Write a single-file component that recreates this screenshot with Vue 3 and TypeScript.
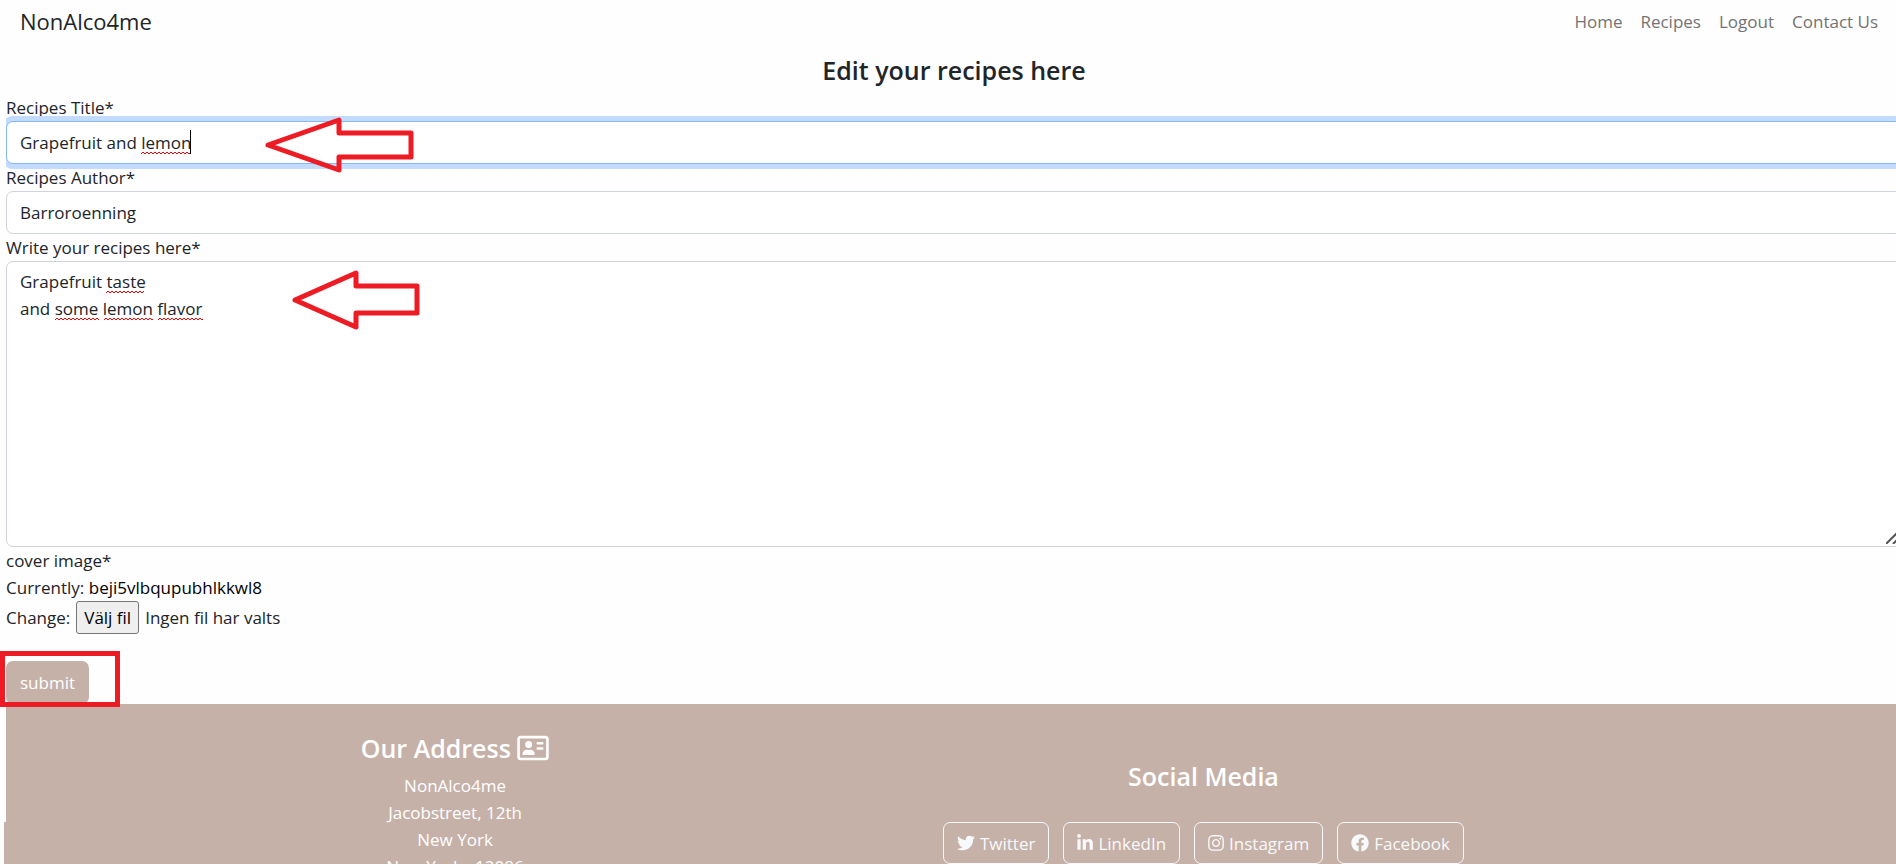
<script setup lang="ts">
import { ref } from 'vue'

interface Mark {
  left: number
  top: number
  width: number
}

const title = ref('Grapefruit and lemon')
const author = ref('Barroroenning')
const recipe = ref('Grapefruit taste\nand some lemon flavor')
const fileStatus = ref('Ingen fil har valts')
const picker = ref<HTMLInputElement | null>(null)

const navLinks: string[] = ['Home', 'Recipes', 'Logout', 'Contact Us']
const addressLines: string[] = ['NonAlco4me', 'Jacobstreet, 12th', 'New York', 'New York , 12086']

const titleMarks: Mark[] = [{ left: 135, top: 30, width: 49 }]
const recipeMarks: Mark[] = [
  { left: 100, top: 29, width: 38 },
  { left: 49, top: 56, width: 44 },
  { left: 98, top: 56, width: 49 },
  { left: 152, top: 56, width: 45 },
]

const socials = [
  {
    name: 'Twitter',
    box: '0 0 512 512',
    width: 18,
    path: 'M459.37 151.716c.325 4.548.325 9.097.325 13.645 0 138.72-105.583 298.558-298.558 298.558-59.452 0-114.68-17.219-161.137-47.106 8.447.974 16.568 1.299 25.34 1.299 49.055 0 94.213-16.568 130.274-44.832-46.132-.975-84.792-31.188-98.112-72.772 6.498.974 12.995 1.624 19.818 1.624 9.421 0 18.843-1.3 27.614-3.573-48.081-9.747-84.143-51.98-84.143-102.985v-1.299c13.969 7.797 30.214 12.67 47.431 13.319-28.264-18.843-46.781-51.005-46.781-87.391 0-19.492 5.197-37.36 14.294-52.954 51.655 63.675 129.3 105.258 216.365 109.807-1.624-7.797-2.599-15.918-2.599-24.04 0-57.828 46.782-104.934 104.934-104.934 30.213 0 57.502 12.67 76.67 33.137 23.715-4.548 46.456-13.32 66.599-25.34-7.798 24.366-24.366 44.833-46.132 57.827 21.117-2.273 41.584-8.122 60.426-16.243-14.292 20.791-32.161 39.308-52.628 54.253z',
  },
  {
    name: 'LinkedIn',
    box: '0 0 448 512',
    width: 16,
    path: 'M100.28 448H7.4V148.9h92.88zM53.79 108.1C24.09 108.1 0 83.5 0 53.8a53.79 53.79 0 0 1 107.58 0c0 29.7-24.1 54.3-53.79 54.3zM447.9 448h-92.68V302.4c0-34.7-.7-79.2-48.29-79.2-48.29 0-55.69 37.7-55.69 76.7V448h-92.78V148.9h89.08v40.8h1.3c12.4-23.5 42.69-48.3 87.88-48.3 94 0 111.28 61.9 111.28 142.3V448z',
  },
  {
    name: 'Instagram',
    box: '0 0 448 512',
    width: 16,
    path: 'M224.1 141c-63.6 0-114.9 51.3-114.9 114.9s51.3 114.9 114.9 114.9S339 319.5 339 255.9 287.7 141 224.1 141zm0 189.6c-41.1 0-74.7-33.5-74.7-74.7s33.5-74.7 74.7-74.7 74.7 33.5 74.7 74.7-33.6 74.7-74.7 74.7zm146.4-194.3c0 14.9-12 26.8-26.8 26.8-14.9 0-26.8-12-26.8-26.8s12-26.8 26.8-26.8 26.8 12 26.8 26.8zm76.1 27.2c-1.7-35.9-9.9-67.7-36.2-93.9-26.2-26.2-58-34.4-93.9-36.2-37-2.1-147.9-2.1-184.9 0-35.8 1.7-67.6 9.9-93.9 36.1s-34.4 58-36.2 93.9c-2.1 37-2.1 147.9 0 184.9 1.7 35.9 9.9 67.7 36.2 93.9s58 34.4 93.9 36.2c37 2.1 147.9 2.1 184.9 0 35.9-1.7 67.7-9.9 93.9-36.2 26.2-26.2 34.4-58 36.2-93.9 2.1-37 2.1-147.8 0-184.8zM398.8 388c-7.8 19.6-22.9 34.7-42.6 42.6-29.5 11.7-99.5 9-132.1 9s-102.7 2.6-132.1-9c-19.6-7.8-34.7-22.9-42.6-42.6-11.7-29.5-9-99.5-9-132.1s-2.6-102.7 9-132.1c7.8-19.6 22.9-34.7 42.6-42.6 29.5-11.7 99.5-9 132.1-9s102.7-2.6 132.1 9c19.6 7.8 34.7 22.9 42.6 42.6 11.7 29.5 9 99.5 9 132.1s2.7 102.7-9 132.1z',
  },
  {
    name: 'Facebook',
    box: '0 0 512 512',
    width: 18,
    path: 'M504 256C504 119 393 8 256 8S8 119 8 256c0 123.78 90.69 226.38 209.25 245V327.69h-63V256h63v-54.64c0-62.15 37-96.48 93.67-96.48 27.14 0 55.52 4.84 55.52 4.84v61h-31.28c-30.8 0-40.41 19.12-40.41 38.73V256h68.78l-11 71.69h-57.78V501C413.31 482.38 504 379.78 504 256z',
  },
]

function markStyle(mark: Mark) {
  return { left: `${mark.left}px`, top: `${mark.top}px`, width: `${mark.width}px` }
}

function onPick(event: Event) {
  const file = (event.target as HTMLInputElement).files?.[0]
  fileStatus.value = file ? file.name : 'Ingen fil har valts'
}
</script>

<template>
  <div class="page">
    <header class="navbar">
      <a class="brand" href="#">NonAlco4me</a>
      <nav class="links">
        <a v-for="link in navLinks" :key="link" href="#">{{ link }}</a>
      </nav>
    </header>

    <div class="shifted">
      <main>
        <h1>Edit your recipes here</h1>
        <form @submit.prevent>
          <label for="title">Recipes Title*</label>
          <div class="field">
            <input id="title" v-model="title" class="control active" type="text" spellcheck="false" />
            <span v-for="(m, i) in titleMarks" :key="i" class="squiggle" :style="markStyle(m)"></span>
            <span class="caret"></span>
            <svg class="arrow arrow-title" viewBox="0 0 150 58" aria-hidden="true">
              <path d="M4 29 L75 4 V17 H147 V41 H75 V54 Z" />
            </svg>
          </div>

          <label for="author">Recipes Author*</label>
          <div class="field">
            <input id="author" v-model="author" class="control" type="text" spellcheck="false" />
          </div>

          <label for="recipe">Write your recipes here*</label>
          <div class="field">
            <textarea id="recipe" v-model="recipe" class="control" rows="10" spellcheck="false"></textarea>
            <span v-for="(m, i) in recipeMarks" :key="i" class="squiggle" :style="markStyle(m)"></span>
            <svg class="grip" viewBox="0 0 14 14" aria-hidden="true">
              <path d="M0 14 L14 0 M7 14 L14 7" />
            </svg>
            <svg class="arrow arrow-recipe" viewBox="0 0 130 62" aria-hidden="true">
              <path d="M4 31 L65 4 V17 H126 V44 H65 V58 Z" />
            </svg>
          </div>

          <label for="cover">cover image*</label>
          <div class="current">Currently: <a href="#">beji5vlbqupubhlkkwl8</a></div>
          <div class="change">
            <span>Change:</span>
            <button class="pick" type="button" @click="picker?.click()">Välj fil</button>
            <span>{{ fileStatus }}</span>
            <input id="cover" ref="picker" type="file" accept="image/*" hidden @change="onPick" />
          </div>

          <div class="actions">
            <button class="submit" type="submit">submit</button>
            <span class="frame"></span>
          </div>
        </form>
      </main>

      <footer>
        <section class="address">
          <h2>
            Our Address
            <svg class="card" viewBox="0 0 576 512" aria-hidden="true">
              <path
                fill-rule="evenodd"
                d="M64 32h448a64 64 0 0 1 64 64v320a64 64 0 0 1-64 64H64a64 64 0 0 1-64-64V96a64 64 0 0 1 64-64zM64 80a16 16 0 0 0-16 16v320a16 16 0 0 0 16 16h448a16 16 0 0 0 16-16V96a16 16 0 0 0-16-16z"
              />
              <circle cx="208" cy="192" r="64" />
              <path
                d="M176 288h64a80 80 0 0 1 80 80 16 16 0 0 1-16 16H112a16 16 0 0 1-16-16 80 80 0 0 1 80-80zM376 144h80a24 24 0 0 1 0 48h-80a24 24 0 0 1 0-48zM376 240h80a24 24 0 0 1 0 48h-80a24 24 0 0 1 0-48z"
              />
            </svg>
          </h2>
          <p v-for="line in addressLines" :key="line">{{ line }}</p>
        </section>
        <section class="social">
          <h2>Social Media</h2>
          <div class="buttons">
            <a v-for="s in socials" :key="s.name" class="outline" href="#">
              <svg :viewBox="s.box" :width="s.width" height="18" aria-hidden="true"><path :d="s.path" /></svg>
              <span>{{ s.name }}</span>
            </a>
          </div>
        </section>
      </footer>
    </div>
  </div>
</template>

<style>
html,
body {
  background: #fefefe;
}
body {
  margin: 0;
}
html {
  scrollbar-width: none;
}
</style>

<style scoped>
.page {
  overflow: hidden;
  color: #212529;
  font-family: 'Segoe UI', 'Open Sans', 'Noto Sans', sans-serif;
  font-size: 17px;
  line-height: 27px;
}
.page * {
  box-sizing: border-box;
}
.navbar {
  display: flex;
  align-items: center;
  justify-content: space-between;
  height: 43px;
  padding: 0 18px 0 20px;
}
.navbar a {
  text-decoration: none;
}
.brand {
  color: #212529;
  font-size: 22px;
}
.links {
  display: flex;
  gap: 18px;
}
.links a {
  color: #737373;
}
.shifted {
  position: relative;
  left: 6px;
}
h1,
h2 {
  margin: 0;
  font-size: 25px;
  font-weight: 600;
  line-height: 32px;
  text-align: center;
}
h1 {
  padding: 11px 0 8px;
}
label {
  display: block;
}
.field {
  position: relative;
}
.control {
  display: block;
  width: 100%;
  margin: 0;
  padding: 6px 13px;
  border: 1px solid #ced4da;
  border-radius: 7px;
  outline: none;
  background: #fff;
  color: #212529;
  font: inherit;
}
input.control {
  height: 43px;
}
textarea.control {
  height: 286px;
  resize: none;
}
.active {
  border-color: #86b7fe;
  box-shadow: 0 0 0 5px #c2dbfe;
  clip-path: inset(-5px 0);
}
.squiggle {
  position: absolute;
  height: 3px;
  background: url("data:image/svg+xml,%3Csvg xmlns='http://www.w3.org/2000/svg' width='4' height='3'%3E%3Cpath d='M0 3 2 1 4 3' fill='none' stroke='red'/%3E%3C/svg%3E")
    repeat-x;
}
.caret {
  position: absolute;
  top: 9px;
  left: 184px;
  width: 1px;
  height: 24px;
  background: #000;
}
.grip {
  position: absolute;
  right: 2px;
  bottom: 3px;
  width: 14px;
  height: 14px;
  fill: none;
  stroke: #555;
  stroke-width: 2;
  pointer-events: none;
}
.arrow {
  position: absolute;
  overflow: visible;
  fill: none;
  stroke: #ed1c24;
  stroke-width: 5;
  stroke-linejoin: round;
  pointer-events: none;
}
.arrow-title {
  top: -5px;
  left: 258px;
  width: 150px;
  height: 58px;
}
.arrow-recipe {
  top: 8px;
  left: 285px;
  width: 130px;
  height: 62px;
}
.current a {
  color: #000;
  text-decoration: none;
}
.change {
  display: flex;
  align-items: center;
  gap: 6px;
}
.pick {
  height: 33px;
  padding: 0 7px;
  border: 1px solid #767676;
  border-radius: 3px;
  background: #efefef;
  color: #000;
  font: inherit;
}
.actions {
  position: relative;
  padding-top: 27px;
}
.submit {
  display: block;
  height: 43px;
  padding: 0 14px;
  border: 0;
  border-radius: 7px;
  background: #c6b1a9;
  color: #fff;
  font: inherit;
}
.frame {
  position: absolute;
  top: 17px;
  left: -6px;
  width: 120px;
  height: 56px;
  border: 5px solid #ed1c24;
  z-index: 1;
  pointer-events: none;
}
footer {
  position: relative;
  display: grid;
  grid-template-columns: 9fr 6fr 4fr;
  padding-top: 28px;
  background: #c6b1a9;
  color: #fff;
  text-align: center;
}
footer::before {
  content: '';
  position: absolute;
  top: 118px;
  bottom: 0;
  left: -2px;
  width: 2px;
  background: #c6b1a9;
}
.address h2 {
  padding-bottom: 8px;
  box-sizing: content-box;
}
.card {
  width: 32px;
  height: 28px;
  fill: #fff;
  vertical-align: -4px;
}
p {
  margin: 0;
}
.social h2 {
  padding: 28px 0 30px;
}
.buttons {
  display: flex;
  justify-content: center;
  gap: 14px;
}
.outline {
  display: flex;
  align-items: center;
  gap: 5px;
  height: 42px;
  padding: 0 13px;
  border: 1px solid #f8f9fa;
  border-radius: 7px;
  color: #f8f9fa;
  text-decoration: none;
}
.outline svg {
  fill: #f8f9fa;
}
</style>
